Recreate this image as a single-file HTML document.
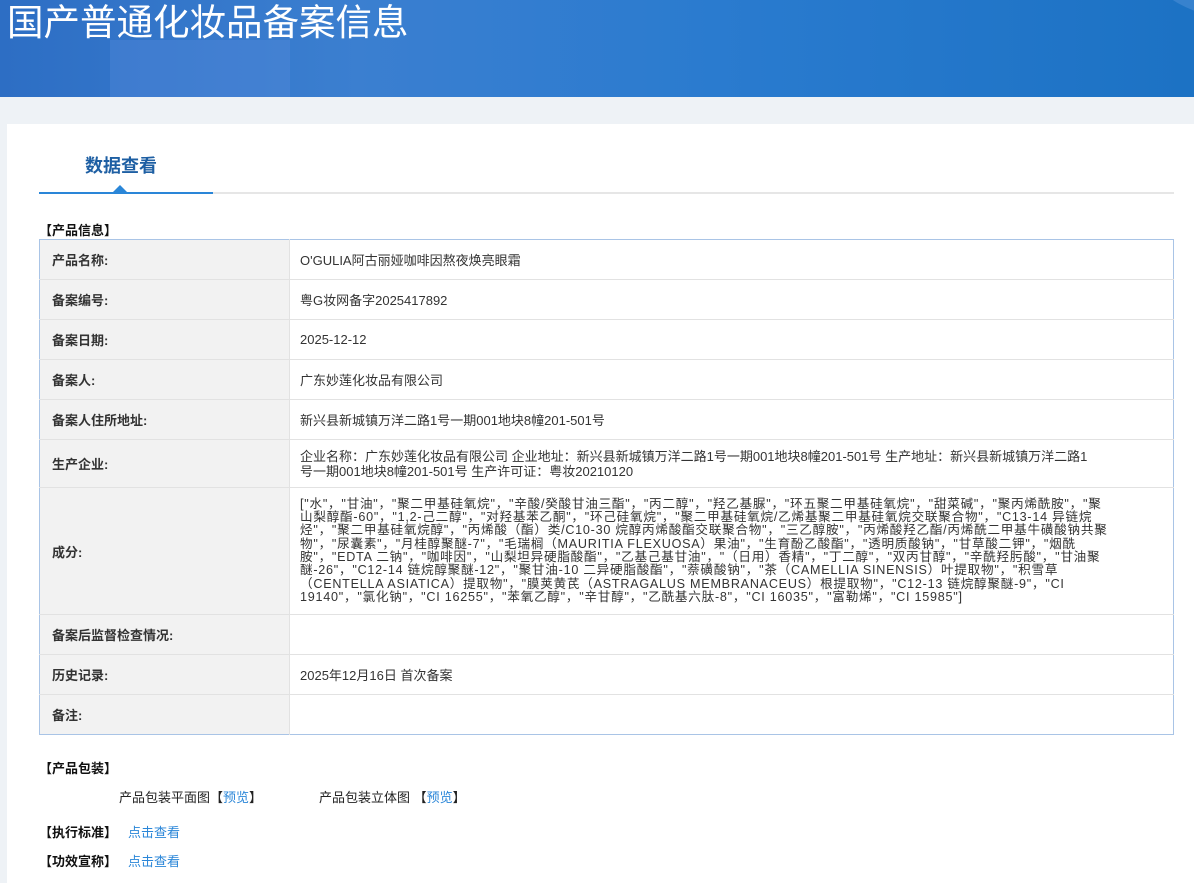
<!DOCTYPE html>
<html><head><meta charset="utf-8"><style>
*{margin:0;padding:0;box-sizing:border-box}
body{width:1194px;height:883px;overflow:hidden;background:#eef2f6;font-family:"Liberation Sans","Microsoft YaHei","Noto Sans CJK SC",sans-serif;color:#333;position:relative}
.hdr{position:absolute;left:0;top:0;width:1194px;height:97px;background:linear-gradient(90deg,#2d6ec4 0%,#3b7fd0 30%,#2a7bcf 60%,#1c72c4 100%);overflow:hidden}
.hdr .b1{position:absolute;left:110px;top:40px;width:180px;height:60px;background:rgba(90,140,220,.35)}
.hdr .c1{position:absolute;left:1150px;top:-90px;width:200px;height:110px;border-radius:50%;background:rgba(120,170,230,.3)}
.hdr h1{position:absolute;left:7px;top:0;font-size:36.5px;font-weight:normal;color:#fff;line-height:46px;letter-spacing:0}
.card{position:absolute;left:7px;top:124px;width:1187px;height:759px;background:#fff}
.tab{position:absolute;left:85px;top:152px;font-size:18px;font-weight:bold;color:#1e5fa3}
.tl{position:absolute;left:39px;top:192px;width:1135px;height:2px;background:#e6e6e6}
.tl2{position:absolute;left:39px;top:192px;width:174px;height:2px;background:#2a86d8}
.tri{position:absolute;left:113px;top:185px;width:0;height:0;border-left:7px solid transparent;border-right:7px solid transparent;border-bottom:7px solid #2a86d8}
.sec{position:absolute;font-size:13px;font-weight:bold;color:#111}
table{position:absolute;left:39px;top:239px;width:1135px;border-collapse:collapse;border:1px solid #a9c4e6;font-size:13px}
td{border-bottom:1px solid #e2e2e2;height:40px;vertical-align:middle}
td.l{width:250px;background:#f2f2f2;font-weight:bold;padding-left:12px;color:#333;border-right:1px solid #e2e2e2}
td.v{padding-left:10px;color:#333}
.ing{font-size:12.6px;line-height:13.3px;white-space:nowrap;letter-spacing:0.75px}
a{color:#2a86d8;text-decoration:none}
.t{position:absolute;font-size:13px;color:#222}
</style></head><body>
<div class="hdr"><div class="b1"></div><div class="c1"></div><h1>国产普通化妆品备案信息</h1></div>
<div class="card"></div>
<div class="tab">数据查看</div>
<div class="tl"></div><div class="tl2"></div><div class="tri"></div>
<div class="sec" style="left:39px;top:220px">【产品信息】</div>
<table>
<tr><td class="l">产品名称:</td><td class="v">O'GULIA阿古丽娅咖啡因熬夜焕亮眼霜</td></tr>
<tr><td class="l">备案编号:</td><td class="v">粤G妆网备字2025417892</td></tr>
<tr><td class="l">备案日期:</td><td class="v">2025-12-12</td></tr>
<tr><td class="l">备案人:</td><td class="v">广东妙莲化妆品有限公司</td></tr>
<tr><td class="l">备案人住所地址:</td><td class="v">新兴县新城镇万洋二路1号一期001地块8幢201-501号</td></tr>
<tr><td class="l" style="height:48px">生产企业:</td><td class="v" style="line-height:15px">企业名称：广东妙莲化妆品有限公司 企业地址：新兴县新城镇万洋二路1号一期001地块8幢201-501号 生产地址：新兴县新城镇万洋二路1<br>号一期001地块8幢201-501号 生产许可证：粤妆20210120</td></tr>
<tr><td class="l" style="height:127px">成分:</td><td class="v ing">["水"，"甘油"，"聚二甲基硅氧烷"，"辛酸/癸酸甘油三酯"，"丙二醇"，"羟乙基脲"，"环五聚二甲基硅氧烷"，"甜菜碱"，"聚丙烯酰胺"，"聚<br>山梨醇酯-60"，"1,2-己二醇"，"对羟基苯乙酮"，"环己硅氧烷"，"聚二甲基硅氧烷/乙烯基聚二甲基硅氧烷交联聚合物"，"C13-14 异链烷<br>烃"，"聚二甲基硅氧烷醇"，"丙烯酸（酯）类/C10-30 烷醇丙烯酸酯交联聚合物"，"三乙醇胺"，"丙烯酸羟乙酯/丙烯酰二甲基牛磺酸钠共聚<br>物"，"尿囊素"，"月桂醇聚醚-7"，"毛瑞榈（MAURITIA FLEXUOSA）果油"，"生育酚乙酸酯"，"透明质酸钠"，"甘草酸二钾"，"烟酰<br>胺"，"EDTA 二钠"，"咖啡因"，"山梨坦异硬脂酸酯"，"乙基己基甘油"，"（日用）香精"，"丁二醇"，"双丙甘醇"，"辛酰羟肟酸"，"甘油聚<br>醚-26"，"C12-14 链烷醇聚醚-12"，"聚甘油-10 二异硬脂酸酯"，"萘磺酸钠"，"茶（CAMELLIA SINENSIS）叶提取物"，"积雪草<br>（CENTELLA ASIATICA）提取物"，"膜荚黄芪（ASTRAGALUS MEMBRANACEUS）根提取物"，"C12-13 链烷醇聚醚-9"，"CI<br>19140"，"氯化钠"，"CI 16255"，"苯氧乙醇"，"辛甘醇"，"乙酰基六肽-8"，"CI 16035"，"富勒烯"，"CI 15985"]</td></tr>
<tr><td class="l">备案后监督检查情况:</td><td class="v"></td></tr>
<tr><td class="l">历史记录:</td><td class="v">2025年12月16日 首次备案</td></tr>
<tr><td class="l" style="border-bottom:none">备注:</td><td class="v" style="border-bottom:none"></td></tr>
</table>
<div class="sec" style="left:39px;top:758px">【产品包装】</div>
<div class="t" style="left:119px;top:787px">产品包装平面图【<a>预览</a>】</div>
<div class="t" style="left:319px;top:787px">产品包装立体图 【<a>预览</a>】</div>
<div class="sec" style="left:39px;top:822px">【执行标准】</div><a class="t" style="left:128px;top:822px;color:#2a86d8">点击查看</a>
<div class="sec" style="left:39px;top:851px">【功效宣称】</div><a class="t" style="left:128px;top:851px;color:#2a86d8">点击查看</a>
</body></html>
